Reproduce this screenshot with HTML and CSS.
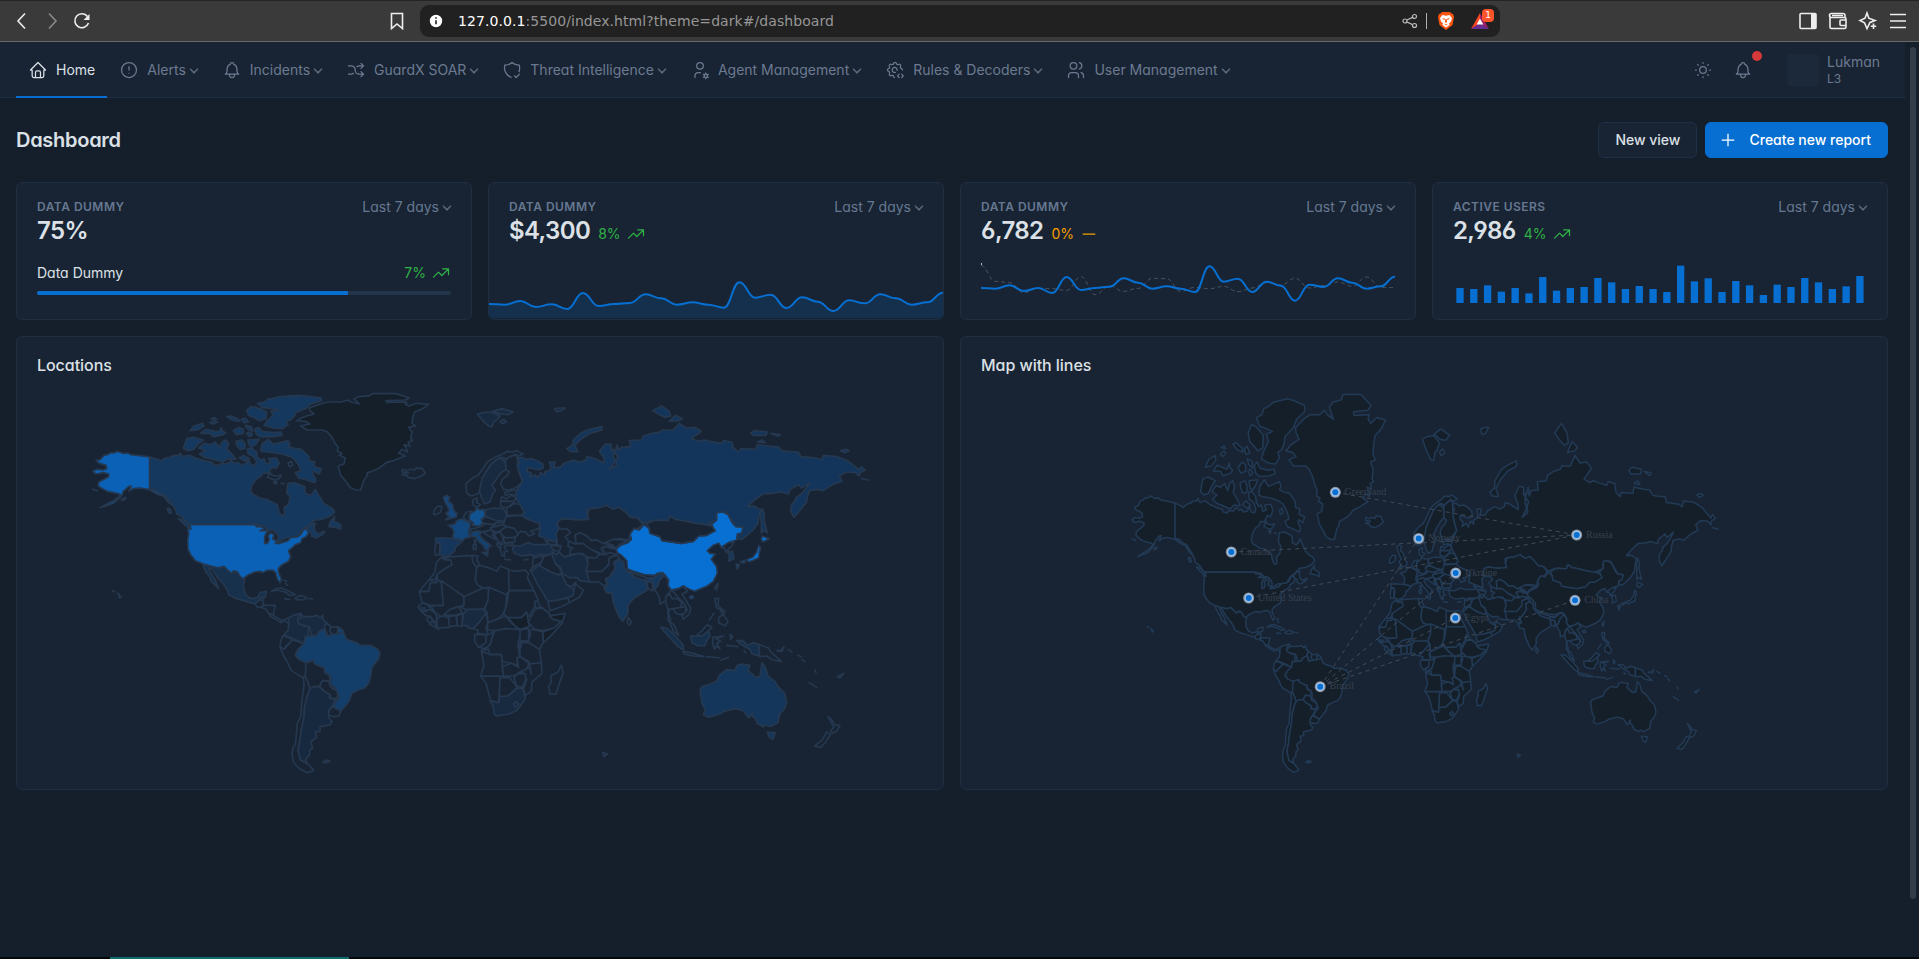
FILE: index.html
```html
<!DOCTYPE html>
<html lang="en">
<head>
<meta charset="utf-8">
<title>Dashboard</title>
<link rel="stylesheet" href="styles.css">
</head>
<body>
<svg class="defs" aria-hidden="true">
  <symbol id="trend" viewBox="0 0 24 24"><path d="M3 17l6-6 4 4 8-8M14 7h7v7"/></symbol>
  <symbol id="bell" viewBox="0 0 24 24"><path d="M10 5a2 2 0 1 1 4 0a7 7 0 0 1 4 6v3a4 4 0 0 0 2 3h-16a4 4 0 0 0 2-3v-3a7 7 0 0 1 4-6M9 17v1a3 3 0 0 0 6 0v-1"/></symbol>
</svg>

<div class="browser">
  <div class="browser-nav">
    <svg class="bi" viewBox="0 0 20 20"><path d="M13 2.500L6 10l7 7.500"/></svg>
    <svg class="bi dim" viewBox="0 0 20 20"><path d="M7 2.500L14 10l-7 7.500"/></svg>
    <svg class="bi" viewBox="0 0 20 20"><path d="M16.500 12A7 7 0 1 1 15.500 5.500"/><path class="solid" d="M17.500 3v6h-6z"/></svg>
  </div>
  <svg class="bi bookmark" viewBox="0 0 20 20"><path d="M4.500 2.500h11v15L10 13l-5.500 4.500z"/></svg>
  <div class="address">
    <svg class="info" viewBox="0 0 14 14"><circle cx="7" cy="7" r="7"/><path d="M7 6.300v4M7 3.300v1.500"/></svg>
    <span class="url"><b>127.0.0.1</b>:5500/index.html?theme=dark#/dashboard</span>
    <svg class="share" viewBox="0 0 16 16"><circle cx="3" cy="8" r="2"/><circle cx="12.500" cy="3.500" r="2"/><circle cx="12.500" cy="12.500" r="2"/><path d="M5 7l5.500-2.600M5 9l5.500 2.600"/></svg>
    <span class="divider"></span>
    <svg class="lion" viewBox="0 0 16 18"><path fill="#fb5412" d="M4 0h8l1.500 1.500L15 2l1 3-1.500 8L8 18l-6.500-5L0 5l1-3 1.500-.5z"/><path fill="#fff" d="M4.500 3l3.500.7 3.500-.7 2.500 3-1 3.500-2 2 .6 1.500L8 15.500l-3.600-2.500.6-1.500-2-2L2 6z"/><path fill="#fb5412" d="M4 6l3 .8-.7 1.400zM12 6l-3 .8.7 1.400zM7.400 7h1.200l.5 3L8 11l-1.100-1zM5.800 11.500L8 12.500l2.200-1L8 13.700z"/></svg>
    <span class="bat">
      <svg viewBox="0 0 18 16"><path fill="#ff4724" d="M9 0L0 16l9-5.500z"/><path fill="#9e1f63" d="M9 0l9 16-9-5.500z"/><path fill="#662d91" d="M0 16h18l-9-6z"/><path fill="#fff" d="M9 5.500l3.300 6H5.700z"/></svg>
      <span class="count">1</span>
    </span>
  </div>
  <div class="browser-tools">
    <svg class="bi" viewBox="0 0 20 20"><rect x="2" y="2.500" width="16" height="15" rx="1"/><path class="solid" d="M13 2.500h5v15h-5z"/></svg>
    <svg class="bi" viewBox="0 0 20 20"><path d="M17 6.500V4.500a2 2 0 0 0-2-2H3.500a2 2 0 0 0 0 4H16.500a1.500 1.500 0 0 1 1.500 1.500v8a1.500 1.500 0 0 1-1.500 1.500H3.500A1.500 1.500 0 0 1 2 16V4.500M18 9h-5a1 1 0 0 0-1 1v3.500a1 1 0 0 0 1 1h5M4 4.500h11"/></svg>
    <svg class="bi" viewBox="0 0 20 20"><path d="M9 2l1.800 5.200L17 9.500l-5 2-3 6-2.500-5.700L2 9.500l5-2.300z"/><path d="M15.500 12.500v5.500M12.800 15.300h5.400"/></svg>
    <svg class="bi" viewBox="0 0 20 20"><path d="M2 3.500h16M2 10h16M2 16.500h16"/></svg>
  </div>
</div>

<div class="viewport">
<nav class="navbar">
  <a class="nav-item active"><svg class="ti" viewBox="0 0 24 24"><path d="M5 12H3l9-9 9 9h-2M5 12v7a2 2 0 0 0 2 2h10a2 2 0 0 0 2-2v-7M9 21v-6a2 2 0 0 1 2-2h2a2 2 0 0 1 2 2v6"/></svg>Home</a>
  <a class="nav-item drop"><svg class="ti" viewBox="0 0 24 24"><circle cx="12" cy="12" r="9"/><path d="M12 8v4M12 16v.010"/></svg>Alerts</a>
  <a class="nav-item drop"><svg class="ti"><use href="#bell"/></svg>Incidents</a>
  <a class="nav-item drop"><svg class="ti" viewBox="0 0 24 24"><path d="M18 4l3 3-3 3M18 20l3-3-3-3M3 7h3a5 5 0 0 1 5 5 5 5 0 0 0 5 5h5M21 7h-5a4.980 4.980 0 0 0-3 1M9 16a4.980 4.980 0 0 1-3 1H3"/></svg>GuardX SOAR</a>
  <a class="nav-item drop"><svg class="ti" viewBox="0 0 24 24"><path d="M11 20.700A12 12 0 0 1 3.500 6 12 12 0 0 0 12 3a12 12 0 0 0 8.500 3 12 12 0 0 1 0 8M15 19l2 2 4-4"/></svg>Threat Intelligence</a>
  <a class="nav-item drop"><svg class="ti" viewBox="0 0 24 24"><circle cx="12" cy="7" r="4"/><path d="M6 21v-2a4 4 0 0 1 4-4h2.500"/><circle cx="19" cy="19" r="2"/><path d="M19 15.500V17M19 21v1.500M22 17.200l-1.300.8M17.300 20l-1.300.800M16 17.200l1.300.8M20.700 20l1.300.8"/></svg>Agent Management</a>
  <a class="nav-item drop"><svg class="ti" viewBox="0 0 24 24"><path d="M11.500 21c-.500 0-1-.400-1.200-1.300a1.700 1.700 0 0 0-2.600-1.100c-1.500 1-3.300-.8-2.400-2.400a1.700 1.700 0 0 0-1-2.500c-1.800-.5-1.800-3 0-3.400a1.700 1.700 0 0 0 1-2.600c-.9-1.500.9-3.300 2.400-2.400 1 .6 2.300.1 2.600-1.100.4-1.700 3-1.700 3.400 0a1.700 1.700 0 0 0 2.600 1.100c1.500-.9 3.300.9 2.400 2.400a1.700 1.700 0 0 0 1 2.600c.9.2 1.300.9 1.300 1.700"/><path d="M14.500 12.500a3 3 0 1 0-2 2.300M20 21l2-2-2-2M17 17l-2 2 2 2"/></svg>Rules &amp; Decoders</a>
  <a class="nav-item drop"><svg class="ti" viewBox="0 0 24 24"><circle cx="9" cy="7" r="4"/><path d="M3 21v-2a4 4 0 0 1 4-4h4a4 4 0 0 1 4 4v2M16 3.130a4 4 0 0 1 0 7.750M21 21v-2a4 4 0 0 0-3-3.850"/></svg>User Management</a>
  <div class="nav-right">
    <svg class="ti" viewBox="0 0 24 24"><circle cx="12" cy="12" r="4"/><path d="M3 12h1M12 3v1M20 12h1M12 20v1M5.600 5.600l.7.700M18.400 5.600l-.7.700M17.700 17.700l.7.700M6.300 17.700l-.7.700"/></svg>
    <span class="notify"><svg class="ti"><use href="#bell"/></svg><i></i></span>
    <span class="avatar"></span>
    <span class="user">Lukman<small>L3</small></span>
  </div>
</nav>

<main class="page">
  <header class="page-head">
    <h1>Dashboard</h1>
    <a class="btn">New view</a>
    <a class="btn primary"><svg class="ti" viewBox="0 0 24 24"><path d="M12 5v14M5 12h14"/></svg>Create new report</a>
  </header>

  <section class="stats">
    <article class="card">
      <div class="card-top"><span class="label">Data Dummy</span><span class="period drop">Last 7 days</span></div>
      <div class="value">75%</div>
      <div class="progress-row"><span>Data Dummy</span><span class="delta up">7% <svg class="ti"><use href="#trend"/></svg></span></div>
      <div class="progress"><div class="progress-fill" style="width:75%"></div></div>
    </article>
    <article class="card">
      <div class="card-top"><span class="label">Data Dummy</span><span class="period drop">Last 7 days</span></div>
      <div class="value">$4,300 <span class="delta up">8% <svg class="ti"><use href="#trend"/></svg></span></div>
      <svg class="area" id="area" viewBox="27 324 1362 120" preserveAspectRatio="none"></svg>
    </article>
    <article class="card">
      <div class="card-top"><span class="label">Data Dummy</span><span class="period drop">Last 7 days</span></div>
      <div class="value">6,782 <span class="delta flat">0% <svg class="ti" viewBox="0 0 24 24"><path d="M5 12h14"/></svg></span></div>
      <svg class="chart" id="lines" viewBox="93 267 1242 132"><path class="tick" d="M94 279v6"/></svg>
    </article>
    <article class="card">
      <div class="card-top"><span class="label">Active users</span><span class="period drop">Last 7 days</span></div>
      <div class="value">2,986 <span class="delta up">4% <svg class="ti"><use href="#trend"/></svg></span></div>
      <svg class="chart" id="bars" viewBox="99 267 1242 132"></svg>
    </article>
  </section>

  <section class="maps">
    <article class="card map-card">
      <h2>Locations</h2>
      <svg class="map" viewBox="37 380 886 400"><g id="world" class="world" transform="translate(60 380) scale(.33333)"></g></svg>
    </article>
    <article class="card map-card">
      <h2>Map with lines</h2>
      <svg class="map" viewBox="981 380 886 400">
        <g id="mercator" class="mercator"></g>
        <g id="links" class="links"></g>
        <g id="pins" class="pins"></g>
      </svg>
    </article>
  </section>
</main>
<div class="scrollbar"></div>
</div>
<div class="taskbar"><span></span></div>
<script src="maps.js"></script>
</body>
</html>
```
FILE: styles.css
```css
* { box-sizing: border-box; }
html, body { height: 100%; }
body {
  margin: 0;
  display: flex;
  flex-direction: column;
  overflow: hidden;
  background: #151f2c;
  color: #dce1e7;
  font: 400 14px/20px Inter, "Liberation Sans", sans-serif;
  font-feature-settings: "cv03", "cv04", "cv11";
}
h1, h2 { margin: 0; }
.defs { position: absolute; width: 0; height: 0; }
.ti {
  width: 20px; height: 20px; flex: none;
  fill: none; stroke: currentColor; stroke-width: 1.5;
  stroke-linecap: round; stroke-linejoin: round;
}

/* browser chrome */
.browser {
  flex: none; height: 42px; display: flex; align-items: center;
  background: #3a3a3a; border-top: 1px solid #242424; border-bottom: 1px solid #66686b;
  padding: 0 11px 0 12px;
}
.bi { width: 20px; height: 20px; fill: none; stroke: #eee; stroke-width: 1.6; }
.bi .solid { fill: #eee; stroke: none; }
.bi.dim { stroke: #8a8a8a; }
.browser-nav { display: flex; gap: 10px; }
.bookmark { margin-left: 295px; }
.address {
  width: 1080px; height: 32px; margin-left: 13px; padding: 0 11px 0 9px;
  display: flex; align-items: center; background: #212121; border-radius: 9px;
}
.info { width: 14px; height: 14px; fill: #fff; stroke: #212121; stroke-width: 1.6; }
.url { flex: 1; margin-left: 15px; color: #969696; font: 14px "DejaVu Sans", sans-serif; letter-spacing: .07px; }
.url b { color: #fff; font-weight: 400; }
.share { width: 16px; height: 16px; fill: none; stroke: #bdbdbd; stroke-width: 1.2; }
.divider { width: 1px; height: 16px; margin: 0 11px 0 8px; background: #b0b0b0; }
.lion { width: 16px; height: 18px; }
.bat { position: relative; margin-left: 17px; width: 18px; height: 16px; }
.bat svg { display: block; width: 18px; height: 16px; }
.count {
  position: absolute; left: 11px; top: -4px; width: 12px; height: 13px; border-radius: 4px;
  background: #fb542b; color: #fff; font: 9px/13px "DejaVu Sans", sans-serif; text-align: center;
}
.browser-tools { display: flex; gap: 10px; margin-left: auto; }

/* top navigation */
.viewport { flex: 1; position: relative; min-height: 0; }
.navbar {
  width: 1905px; height: 56px; padding-left: 16px; display: flex;
  background: #182433; border-bottom: 1px solid #1f2e41; color: #6c7a91;
}
.nav-item { display: flex; align-items: center; padding: 0 12px; height: 56px; white-space: nowrap; }
.nav-item .ti { margin-right: 8px; }
.nav-item.active { color: #dce1e7; border-bottom: 2px solid #066fd1; padding-top: 2px; }
.drop::after {
  content: ""; width: 5px; height: 5px; margin: 0 1px 2px 5px; flex: none;
  border: solid currentColor; border-width: 0 1px 1px 0; transform: rotate(45deg);
  outline: 0; box-shadow: .4px .4px 0 currentColor;
}
.nav-right { margin-left: auto; padding-right: 25px; display: flex; align-items: center; }
.notify { position: relative; margin-left: 20px; display: flex; }
.notify i { position: absolute; left: 19px; top: -9px; width: 10px; height: 10px; border-radius: 50%; background: #d63939; }
.avatar { width: 32px; height: 32px; margin-left: 34px; border-radius: 4px; background: #1b293a; }
.user { margin-left: 8px; line-height: 18px; }
.user small { display: block; font-size: 12px; line-height: 16px; }

/* page */
.page { width: 1905px; padding: 24px 17px 0 16px; }
.page-head { display: flex; align-items: center; gap: 8px; height: 36px; }
.page-head h1 { flex: 1; font-size: 20px; line-height: 28px; font-weight: 600; letter-spacing: -.28px; }
.btn {
  height: 36px; padding: 0 16px; display: flex; align-items: center;
  border: 1px solid #1f3047; border-radius: 6px; background: #182433; font-weight: 500;
}
.btn.primary { background: #066fd1; border-color: #066fd1; color: #fff; padding-left: 12px; }
.btn .ti { margin-right: 11px; }
.stats { display: grid; grid-template-columns: repeat(4, 1fr); gap: 16px; margin-top: 24px; }
.card {
  height: 138px; padding: 16px 20px; overflow: hidden; background: #182433;
  border: 1px solid #1f2e41; border-radius: 6px; display: flex; flex-direction: column;
}
.card-top { display: flex; justify-content: space-between; align-items: center; height: 16px; color: #667891; flex: none; }
.label { font-size: 12px; font-weight: 600; letter-spacing: .04em; text-transform: uppercase; }
.period { display: flex; align-items: center; }
.value {
  margin-top: 1px; font-size: 24px; line-height: 29px; font-weight: 600; letter-spacing: -.6px;
  display: flex; align-items: baseline; gap: 8px;
}
.delta { font-size: 14px; line-height: 20px; font-weight: 400; letter-spacing: 0; display: inline-flex; align-items: center; gap: 5px; }
.up { color: #2fb344; }
.flat { color: #f59f00; }
.progress-row { display: flex; justify-content: space-between; margin-top: 18px; }
.progress { height: 4px; margin-top: 8px; border-radius: 2px; background: #243449; overflow: hidden; }
.progress-fill { height: 4px; background: #066fd1; }
.chart { width: 414px; height: 44px; margin-top: auto; flex: none; }
.area { width: 454px; height: 40px; margin: auto -20px -15px; flex: none; }
.line { fill: none; stroke: #066fd1; stroke-width: 6; stroke-linecap: round; }
.line.prev { stroke: #4a5563; stroke-width: 3; stroke-dasharray: 12 9; stroke-linecap: butt; }
.tick { stroke: #dce1e7; stroke-width: 3; }
.fill { fill: #066fd1; opacity: .16; }
.bar { fill: #066fd1; }
.maps { display: grid; grid-template-columns: 1fr 1fr; gap: 16px; margin-top: 16px; }
.map-card { height: 454px; padding: 18px 20px 9px; }
.map-card h2 { font-size: 16px; line-height: 20px; font-weight: 500; letter-spacing: -.05px; }
.map { width: 886px; height: 400px; margin-top: auto; flex: none; }

/* maps */
.world path { stroke: #25384f; stroke-width: 5; stroke-linejoin: round; }
.mercator path { fill: #151f2a; stroke: #233a55; stroke-width: 1.5; stroke-linejoin: round; }
.links line { stroke: #414b58; stroke-width: 1; stroke-dasharray: 4 4; }
.pins .halo { fill: #8b939f; }
.pins .ring { fill: #a3c4ea; }
.pins .dot { fill: #066fd1; }
.pins text { font: 10px "Liberation Serif", serif; fill: #35404e; }

.scrollbar { position: absolute; right: 3px; top: 5px; width: 6px; height: 852px; border-radius: 3px; background: #333d49; }
.taskbar { flex: none; height: 2px; background: #04090c; }
.taskbar span { display: block; width: 239px; height: 2px; margin-left: 110px; background: #0f6c6c; }
```
FILE: maps.js
```js
const NS = 'http://www.w3.org/2000/svg';
function add(id, tag, attrs, text) {
  const el = document.createElementNS(NS, tag);
  for (const k in attrs) el.setAttribute(k, attrs[k]);
  if (text) el.textContent = text;
  document.getElementById(id).appendChild(el);
}

// Small charts
function smooth(x0, step, ys) {
  let d = `M${x0} ${ys[0]}`;
  for (let i = 1; i < ys.length; i++) {
    const a = x0 + step * (i - 1), b = x0 + step * i;
    d += `C${a + step * .45} ${ys[i - 1]} ${b - step * .45} ${ys[i]} ${b} ${ys[i]}`;
  }
  return d;
}
const revenue = [402,404,393,411,403,417,369,408,402,399,373,385,404,397,404,413,337,383,374,414,382,395,423,391,400,373,385,404,397,368];
const clients = [354,356,346,363,354,369,321,360,354,350,325,338,356,349,356,366,289,335,326,366,335,347,392,344,351,325,338,356,349,320];
const previous = [287,334,338,368,355,356,361,320,374,348,364,355,325,326,364,352,356,349,365,354,338,345,325,354,347,336,349,321,352,353];
const users = [354,357,346,365,354,370,321,362,354,351,324,337,357,348,357,366,287,334,325,366,333,346,375,344,351,324,337,357,349,318];
const rev = smooth(27, 1362 / 29, revenue);
add('area', 'path', { class: 'fill', d: rev + 'V444H27Z' });
add('area', 'path', { class: 'line', d: rev });
add('lines', 'path', { class: 'line prev', d: smooth(93, 1242 / 29, previous) });
add('lines', 'path', { class: 'line', d: smooth(93, 1242 / 29, clients) });
users.forEach((y, i) => add('bars', 'rect', { class: 'bar', x: 109 + 41.37 * i, y, width: 22, height: 399 - y }));

// Countries: [fill, outline rings]
const none = '#182433', dark = '#151f2a', low = '#182a40';
const west = [
['#0b61b6','269,231 240,227 213,224 204,219 188,220 172,214 162,219 152,218 142,224 132,226 122,238 108,242 118,250 138,256 140,266 128,270 112,268 98,274 108,282 130,278 146,282 146,290 132,298 116,306 114,318 130,328 142,334 160,338 172,340 182,344 172,354 158,364 140,372 120,383 140,377 160,370 176,356 186,346 190,334 206,320 214,318 206,334 220,326 240,324 262,328 276,328 290,334 304,338 316,350 326,360 340,378 326,368 310,348 296,344 280,336 269,330;184,358 198,352 196,358 186,361;98,328 112,332'],
['#0b61b6','390,433 584,433 590,440 604,440 612,446 600,452 614,452 630,450 618,460 614,472 614,490 622,490 628,478 624,468 632,458 642,464 638,478 650,482 646,490 660,490 684,482 692,472 712,470 722,464 730,450 740,446 746,460 738,470 726,476 722,488 706,494 698,502 686,512 692,530 686,544 664,556 655,566 656,578 664,598 660,608 652,596 646,576 636,570 620,572 606,578 602,574 584,576 566,584 552,594 550,602 540,590 532,576 522,572 514,580 502,570 492,560 474,564 450,558 430,552 406,542 392,524 384,508 383,480 386,460 382,438 392,446;158,632 164,635;172,640 178,643;176,646 184,650 178,653'],
['#14385e','269,231 292,238 302,242 316,234 330,232 342,226 356,226 360,220 368,230 388,226 406,234 440,244 456,246 460,254 476,256 484,250 500,252 514,242 524,250 534,246 540,254 556,252 566,240 572,254 584,256 590,246 582,230 564,222 562,206 574,204 590,216 592,230 602,240 612,236 618,252 632,248 626,236 650,234 658,250 648,266 636,262 624,280 610,278 602,290 590,296 576,314 572,334 580,344 594,350 604,356 620,358 640,368 652,374 656,392 660,402 668,408 674,402 672,384 686,372 690,352 680,338 684,310 704,308 720,314 734,320 736,340 750,346 758,340 766,328 774,342 784,358 788,366 800,376 818,386 824,396 812,408 786,418 764,420 748,434 742,442 752,434 766,430 762,440 764,452 774,462 794,454 790,462 768,474 754,468 756,460 742,450 740,440 726,450 712,470 692,472 676,474 660,484 648,488 656,474 650,460 638,450 622,448 612,438 584,433 390,433 382,430 366,410 350,402 348,392 338,374 316,346 300,340 286,330 269,326'],
['#14385e','784,54 740,48 716,46 660,50 636,56 622,58 614,66 592,70 606,82 636,86 656,90 632,94 640,106 622,122 612,136 640,144 668,146 684,134 678,124 692,120 702,110 706,98 740,84 752,72 784,62;560,92 572,80 588,82 604,88 620,96 618,116 598,122 584,114 566,106;584,148 596,142 606,154 640,158 664,156 666,166 640,170 604,171 590,164;556,136 574,140 578,154 562,146;422,160 436,148 456,152 476,156 484,144 488,154 498,158 490,164 460,170 450,160;390,152 402,138 428,130 432,138 412,150;450,128 462,122 472,126 460,132;452,116 464,113 470,118;500,110 512,108 534,116 540,124 516,120;544,118 556,114 566,126 552,128;520,152 536,142 550,148 550,160 530,164;560,160 568,156 578,164 568,170;370,204 380,176 400,172 430,180 414,192 402,208 384,212;416,204 432,190 450,194 466,186 478,202 486,186 498,180 506,192 500,206 516,222 528,238 504,236 488,246 460,238 434,232 418,222 436,212;528,184 546,180 556,192 554,206 540,208 530,196;564,180 598,178 588,192 574,202 566,192;538,234 550,226 568,236 556,244;602,212 606,192 624,178 640,192 660,188 684,182 690,192 684,200 706,206 724,208 746,228 748,242 764,246 762,260 784,266 778,282 760,274 758,280 768,300 764,308 734,298 716,294 706,278 722,272 716,256 704,240 696,232 684,228 664,222 640,218 616,216;806,440 812,424 824,410 822,424 842,434 842,448 828,442;354,416 370,420 388,436 392,448 376,436;322,386 330,386 334,400 326,398'],
[none,'622,292 630,278 636,286 650,288 664,286 658,296 644,300;640,306 650,304 648,312;684,250 694,244 698,256 688,260;664,310 672,312'],
[dark,'710,122 728,112 740,108 762,102 750,92 748,84 780,72 804,66 844,66 862,60 874,66 898,72 882,56 896,50 930,47 936,41 1008,41 1048,54 1036,60 978,62 980,67 1040,66 1036,72 1046,78 1070,70 1106,73 1088,86 1064,96 1058,112 1056,130 1066,138 1046,142 1056,156 1052,176 1058,182 1044,186 1050,198 1032,194 1040,206 1042,216 1026,208 1016,220 1036,228 1014,236 1000,242 978,248 958,264 936,274 922,278 920,290 912,300 902,330 888,330 870,322 856,302 842,286 834,258 852,252 856,234 838,226 846,220 832,214 834,202 824,188 816,172 802,156 788,150 740,150 722,138 750,132 736,124'],
[none,'1028,268 1040,272 1050,268 1064,270 1068,264 1086,265 1096,280 1084,288 1064,296 1044,292 1040,286 1026,284 1046,278 1026,276'],
['#17304c','428,554 450,558 474,564 492,560 502,570 514,580 522,574 532,576 540,590 554,600 550,614 552,632 560,648 576,656 594,652 600,638 620,634 616,650 602,654 594,662 586,672 570,668 530,656 506,644 502,630 490,612 474,594 456,566 446,564 452,578 464,596 476,626 454,604 450,592 438,576'],
[none,'586,672 594,662 604,660 600,654 612,652 608,668 612,672 602,682 590,680;602,682 614,676 646,676 642,692 640,706 626,700 618,688;626,700 640,706 652,714 668,722 684,714 690,724 686,730 672,722 662,728 644,716 632,710;634,634 648,626 664,624 684,632 706,644 688,646 676,636 650,630;706,654 722,646 742,654 728,660 708,658;674,656 688,658;748,656 758,657;672,600 680,604;676,610 682,616'],
[low,'686,714 700,706 722,700 714,712 716,730 730,738 748,740 744,756 748,776 736,768 734,792 718,784 700,776 680,768 670,766 684,752 686,734'],
[low,'722,700 730,710 756,710 772,706 780,714 788,706 790,720 800,728 794,740 796,752 776,756 770,768 756,768 752,754 748,740 730,736 716,730 712,718 724,714'],
[none,'800,728 812,740 810,752 816,766 804,768 796,752 794,740;812,742 834,740 832,762 816,764 810,752'],
['#124272','836,742 850,752 844,764 832,762'],
[none,'668,768 690,774 696,784 680,796 672,808 666,806 660,798 662,784'],
[none,'696,780 712,784 732,792 730,800 716,806 706,824 716,838 736,842 740,852 736,890 730,894 694,872 682,846 668,822 660,800 672,808 690,788'],
['#133e6a','732,792 736,770 756,768 770,768 778,754 794,746 800,768 816,764 832,762 850,756 858,776 870,782 890,788 900,796 930,796 952,806 960,820 956,836 936,862 932,890 926,910 914,924 896,930 876,940 868,962 856,978 842,994 832,986 820,980 828,964 838,954 834,938 824,922 812,912 814,896 808,884 794,876 794,864 764,852 760,840 738,848 716,838 706,824 716,806'],
[none,'738,848 760,842 764,852 792,864 794,878 808,886 810,904 788,902 778,920 762,920 750,928 744,908 736,890'],
[none,'788,902 806,904 812,922 830,932 834,942 828,956 812,954 810,944 790,932 778,920'],
[none,'816,978 842,994 836,1008 820,1010 804,1004 808,992'],
[none,'730,892 736,890 744,908 750,926 742,946 734,980 732,1010 724,1050 720,1080 714,1110 722,1140 744,1152 762,1172 740,1178 716,1164 700,1146 696,1120 700,1100 706,1096 712,1030 722,1010 726,960 732,916'],
['#17293f','750,926 762,920 778,920 790,932 810,944 808,954 828,960 816,978 806,992 806,1014 816,1024 812,1034 780,1040 780,1054 766,1056 770,1072 752,1086 758,1104 750,1110 748,1126 738,1136 740,1148 722,1140 714,1110 720,1080 724,1050 732,1010 734,980 742,946'],
[none,'788,1146 800,1140 810,1144 798,1148']
];
const east = [
['#14467a','130,352 140,346 150,352 144,362 158,374 160,386 166,398 172,400 168,412 150,416 136,420 148,410 138,400 148,390 140,376 134,364'],
[none,'104,388 114,378 126,380 122,396 108,404 100,402'],
[none,'198,310 218,294 236,284 252,262 262,246 284,232 304,224 322,214 336,216 350,212 370,222 354,228 346,222 330,230 318,236 302,232 288,240 274,252 258,276 246,296 244,316 240,334 232,342 214,348 200,340'],
[low,'302,234 316,246 318,268 304,278 290,296 276,316 286,330 276,346 270,366 254,372 244,352 238,334 246,296 258,276 274,252 288,240'],
[none,'316,240 330,230 346,224 354,232 352,258 360,284 368,304 350,322 328,330 310,328 302,310 308,296 320,288 328,276 318,268'],
[none,'218,360 232,354 230,368 242,374 230,382 220,376'],
['#115390','214,398 226,392 230,384 240,390 252,388 256,408 244,418 248,430 238,438 218,436 220,428 208,420 208,406'],
[none,'190,410 200,396 214,394 208,406 208,424 196,420'],
['#12477d','144,436 166,432 168,424 184,416 196,422 212,430 208,446 206,458 210,472 196,474 188,482 158,474 162,456 156,444'],
['#15355a','106,474 130,474 160,476 188,482 178,492 166,502 164,514 148,526 132,530 120,522 122,504 120,488 108,486'],
[none,'108,488 120,490 118,524 106,526 104,508'],
['#124272','212,462 216,454 232,452 246,456 238,464 248,478 262,488 274,498 266,500 264,512 256,508 250,496 236,484 226,470 214,470;246,518 264,516 262,528'],
[none,'220,494 228,494 228,508 220,508;222,480 227,480 226,490'],
[none,'208,448 228,444 246,438 256,430 272,430 284,440 270,450 246,456 232,452 214,458'],
[low,'256,390 280,384 310,386 318,398 320,416 310,424 282,420 256,408'],
[none,'244,420 256,410 284,420 300,424 280,434 250,430;284,430 310,426 310,436 286,442'],
[none,'314,338 332,332 350,330 348,346 330,342 316,346;302,362 306,350 320,356 334,346 348,352 342,364;302,364 342,364 336,376 320,384 302,378;320,384 338,370 360,374 374,398 364,406 322,406'],
[none,'318,410 366,406 380,416 400,424 420,430 416,446 392,454 404,462 386,468 378,456 362,454 352,464 344,446 322,440 310,434'],
[none,'302,450 322,440 344,446 354,464 346,472 318,474 304,464'],
[none,'272,442 286,440 308,434 318,440 298,454 278,456;250,458 272,450 292,458 276,464 292,480 276,474;280,458 300,456 308,470 310,484 298,490 292,478;308,474 346,472 344,486 316,490;290,490 300,490 302,506 294,500;302,494 324,488 338,486 336,496 318,496 312,502 322,514 312,516 314,530 306,526 300,508;314,538 332,540;372,540 384,538'],
['#182c45','340,496 360,498 384,488 402,494 436,494 450,490 462,516 456,524 420,524 400,530 396,524 366,528 344,520 338,508'],
[none,'434,480 468,486 476,500 450,494;450,494 468,494 484,498 478,514 460,510'],
['#14355b','350,234 366,232 378,238 396,236 412,242 428,252 430,264 416,270 382,262 382,274 394,280 390,292 406,284 414,294 422,278 436,286 434,276 454,268 448,246 466,246 460,262 480,262 492,250 520,240 538,246 558,240 560,230 580,234 612,248 612,234 598,214 616,192 634,194 634,212 640,208 640,232 646,244 628,268 650,256 648,240 654,228 642,218 648,206 652,194 656,214 664,202 692,200 688,182 724,180 730,168 756,160 780,156 786,150 820,150 838,130 858,144 884,142 904,154 874,176 896,184 912,180 930,184 964,190 970,182 996,186 1000,204 1016,216 1022,206 1068,208 1072,194 1120,200 1134,200 1146,212 1160,214 1196,216 1202,230 1250,234 1264,240 1270,226 1312,230 1342,242 1366,260 1378,270 1384,260 1396,270 1380,278 1378,288 1366,278 1338,276 1318,288 1326,304 1298,314 1270,332 1252,328 1228,332 1222,350 1220,366 1196,396 1182,412 1172,394 1174,374 1184,364 1188,352 1204,342 1216,328 1230,308 1214,318 1204,324 1196,314 1170,328 1166,342 1140,336 1116,340 1088,342 1064,360 1042,380 1062,378 1082,390 1076,414 1074,430 1058,452 1036,470 1026,478 1012,476 1014,462 1030,442 1008,440 998,424 980,398 956,396 950,404 950,424 938,424 918,434 890,430 850,422 826,418 810,408 804,422 764,420 748,424 732,430 712,414 692,412 676,396 658,382 640,388 620,376 596,384 568,386 560,390 562,404 566,418 532,420 494,416 478,420 472,432 476,448 468,460 472,486 446,478 416,468 420,446 420,430 400,424 380,416 364,406 374,398 362,376 350,360 346,348 352,328 368,304 360,284 352,258 360,248'],
['#14355b','1086,386 1094,402 1092,420 1096,436 1102,458 1088,450 1084,460 1084,430 1082,404;500,206 518,196 520,180 544,158 570,148 606,140 606,150 570,160 544,176 524,196 534,216 510,214;758,92 784,78 806,92 812,108 796,112 774,102;808,124 826,106 848,116 836,122;1052,158 1064,152 1102,156 1098,166 1060,166;1112,160 1142,164 1134,169;1072,186 1086,180 1096,188;1322,212 1338,208 1348,212 1334,218;1384,296 1406,300'],
[low,'232,102 250,98 276,96 300,108 290,120 282,124 276,140 266,138 250,124;278,94 306,86 340,96 324,104 302,102;300,124 312,118 320,126 306,130;464,86 480,84 496,84 480,94 468,94'],
[none,'472,432 478,420 494,416 532,420 566,418 562,404 568,386 596,384 620,376 640,388 658,382 676,396 692,412 712,414 728,432 716,446 702,446 690,462 686,480 660,476 640,478 620,486 608,492 590,480 574,482 560,468 540,458 526,464 528,494 506,484 496,470 512,458 500,446 484,448 474,442'],
[none,'506,484 526,492 548,490 570,506 600,520 588,534 562,532 548,520 510,524 510,510 520,504 504,500;528,490 526,464 540,458 560,468 574,482 590,480 608,490 636,494 618,500 624,510 610,500 604,508 612,516 604,524 570,506 548,490'],
[none,'616,488 640,478 686,482 660,492 650,502 630,500 640,496;612,516 604,504 622,500 634,506 650,506 654,520 628,526'],
[low,'454,516 470,524 476,516 492,530 512,526 534,520 558,528 564,552 558,572 570,588 568,606 540,602 530,592 510,594 488,580 480,560 466,552 458,536'],
[none,'430,530 456,522 466,552 478,562 486,580 474,584 452,576 420,558 424,546;400,534 432,528 424,546 402,560 398,550;390,572 400,558 414,562 402,572'],
[low,'394,574 416,556 452,576 474,584 486,584 500,614 522,628 526,646 476,660 444,664 436,652 430,640 412,612'],
[none,'444,664 476,660 504,654 508,668 480,682 450,692;522,628 526,612 550,630 540,650 508,668 504,654 520,646;500,614 514,620 528,606 522,628'],
[none,'562,532 588,534 600,522 616,524 628,518 650,522 628,534 626,554 606,574 570,580 558,572 564,552'],
[none,'560,574 606,574 626,554 628,534 650,526 660,536 642,546 646,566 628,592 616,596 622,616 608,616 598,606 568,606'],
['#15375c','642,546 658,538 672,546 672,560 686,578 702,590 736,602 742,594 758,596 778,582 796,580 792,592 778,602 774,616 764,630 758,610 740,604 742,630 722,642 700,656 684,676 684,700 668,724 656,708 640,668 636,640 620,638 612,624 626,616 618,600 628,592 646,566'],
[none,'688,574 712,584 738,592 736,602 702,590;740,606 758,608 758,632 744,626;684,712 694,726 688,736 682,728;742,594 758,592 758,598'],
['#0770d2','648,508 662,496 684,488 694,478 690,462 702,446 718,450 732,434 748,446 750,460 780,470 786,482 844,490 880,484 896,468 920,466 942,452 936,434 918,434 938,430 950,420 950,398 970,396 984,404 998,430 1008,440 1030,442 1024,460 1012,462 1010,480 986,488 964,502 956,490 940,496 922,512 930,520 946,522 934,538 950,560 952,580 940,604 922,618 884,634 868,628 850,618 836,626 814,630 804,618 806,600 796,586 788,578 772,580 764,586 732,584 700,574 682,566 680,542 662,524 654,520'],
['#0770d2','868,650 878,646 880,654 872,656;1086,468 1096,472 1108,476 1096,482 1088,486 1084,478;1076,496 1082,504 1078,518 1076,534 1062,540 1046,546 1042,538 1058,532 1070,516;1008,552 1018,554 1012,568;1020,546 1038,540 1032,550'],
[none,'740,432 764,420 804,422 810,408 826,418 850,422 890,430 918,434 936,438 946,452 920,466 896,468 880,484 844,490 786,482 780,470 750,460 748,446'],
[none,'964,502 986,488 1002,486 994,500 982,510 990,516 978,516 974,504'],
['#17375c','984,518 998,514 1002,536 986,544 988,530'],
[none,'944,624 954,610 950,630'],
[none,'764,630 774,616 778,602 792,586 804,600 804,618 814,632 800,646 796,664 780,672 778,650'],
[none,'798,650 810,642 816,656 832,656 846,668 842,682 820,686 808,688 806,700 812,720 804,722 804,690 798,668;816,632 836,626 850,618 862,634 846,642 862,668 872,684 868,702 850,718 846,708 862,690 852,670 836,654 824,640;820,686 842,682 858,680 856,698 840,704 826,698;808,724 822,734 836,766 820,754'],
['#16304b','782,742 800,744 816,758 830,772 850,796 850,810 834,800 812,776;872,768 888,768 906,768 926,752 930,768 920,782 914,798 890,796 876,788;1040,796 1060,788 1078,794 1078,828 1056,822 1050,808 1034,800 1022,792 1010,782 1030,782'],
[none,'890,766 906,752 922,734 936,742 926,752 906,768;850,814 880,820 912,830 880,828 852,822;920,830 960,834;964,840 986,832;938,772 972,768 948,776 962,784 950,790 960,806 948,798 944,808 938,790;990,762 998,770 992,778;980,796 1014,800;1032,812 1038,820;1078,794 1106,804 1112,816 1144,844 1118,840 1100,828 1078,830;1130,812 1144,810 1152,800 1146,814;1164,808 1176,816;1194,826 1204,830;1206,838 1214,844;1244,870 1248,878;1228,908 1250,922;1312,890 1332,880 1320,894;944,656 956,654 954,676 968,690 950,684;956,712 970,704 984,724 976,738 956,728;928,720 942,700;960,690 974,692 970,706'],
['#14365a','900,930 906,920 930,912 950,904 958,886 980,868 1004,872 1012,856 1024,852 1050,856 1044,872 1068,892 1080,890 1086,848 1096,862 1104,888 1126,906 1134,920 1154,940 1160,966 1154,986 1140,1000 1134,1028 1110,1040 1098,1034 1090,1040 1072,1030 1066,1016 1056,1008 1058,998 1046,1014 1030,992 1006,986 972,994 960,1002 926,1012 910,1004 916,990 906,970;1102,1056 1126,1058 1118,1078 1108,1072'],
[none,'1284,1010 1296,1020 1304,1034 1320,1036 1310,1054 1298,1060 1292,1052 1302,1042;1280,1056 1292,1062 1276,1088 1262,1102 1244,1098 1268,1078;608,1118 622,1122 612,1130;484,856 490,878 478,910 468,942 450,942 446,920 454,906 452,888 474,876'],
[none,'110,546 124,532 134,540 152,540 156,554 138,564 112,582 104,600 86,600 104,578;86,600 110,598 110,608 92,608 88,634 58,634;124,534 160,530 216,526 218,546 230,562 226,600 234,616 250,624 192,650 112,598 112,582 138,564 156,554 152,540;216,526 234,528 230,540 238,552 230,562 218,546'],
[none,'230,562 240,556 268,564 290,574 300,558 326,568 327,634 318,644 266,622 250,624 234,616 226,600;326,570 350,574 376,570 386,582 382,594 402,632 327,632;58,636 86,634 92,608 110,608 110,598 124,608 130,676 92,676 66,668;124,602 192,650 192,676 160,684 136,704 124,710 106,698 92,678 130,676'],
[none,'192,650 250,624 266,626 264,660 252,688 200,690 184,682 192,676;266,622 320,644 318,676 312,700 294,716 264,728 262,700 254,688 264,660;327,632 402,632 414,660 400,686 386,710 376,698 366,712 324,714 310,700 320,676'],
[dark,'322,712 350,714 366,712 380,696 388,740 360,748 344,736'],
[none,'404,690 420,680 444,696 456,714 484,724 462,744 430,752 404,748 384,726 392,712;404,664 414,664 420,678 444,698 430,684 408,686'],
[dark,'448,708 496,700 486,730 456,764 430,788 428,756 462,744 484,724 460,718'],
[none,'54,680 70,668 84,676 94,690 60,690;60,690 94,690 106,700 112,716 104,728 92,710 76,706;80,718 90,708 98,722 90,732;98,722 116,748 88,732;112,744 110,714 130,708 146,714 148,742;148,740 146,710 168,706 172,736;130,706 150,688 176,680 186,698 166,706;172,738 170,708 188,700 186,738;58,684 76,684;64,694 80,694'],
[low,'186,738 190,702 202,688 252,688 258,704 240,724 220,746 206,744 200,736'],
[none,'220,746 240,724 258,700 264,730 258,740 264,764 232,760 234,750;264,750 262,730 296,716 316,708 334,728 356,748 318,746 284,752;224,764 258,764 258,788 236,802 224,784;258,764 272,762 282,752 272,790 256,808 240,802 258,788;284,752 318,746 356,748 364,756 354,788 358,830 350,856 334,850 306,844 304,824 270,824 266,808 246,810 270,796 278,770'],
[none,'360,750 384,746 392,762 384,782 360,784;386,750 402,748 428,756 430,788 418,808 386,788;360,788 386,788 418,808 424,848 390,852 360,830;354,792 364,792 362,804 356,806;244,812 270,824 304,824 306,844 310,888 242,888 252,856;306,860 334,850 356,862 350,834 362,830 388,846 380,866 340,888 310,888;424,848 426,880 396,906 394,934 376,946 370,926 380,900 374,880 356,878 388,862 394,882 388,852;342,892 356,880 376,882 378,900 366,922 350,918;300,894 328,892 352,922 324,948 298,952;242,888 328,890 300,894 296,968 272,962 258,910'],
[low,'270,962 296,968 298,950 324,948 352,924 368,926 376,956 352,990 328,1002 290,1008 282,1000 280,980;340,972 350,964 356,974 346,982']
];
const parse = s => s.split(';').map(r => r.trim().split(/\s+/).map(p => p.split(',').map(Number)));
const toPath = rings => rings.map(r => 'M' + r.map(p => p.map(n => +n.toFixed(1)).join(' ')).join('L') + 'Z').join('');

// Miller sheet to Mercator sheet
function mercator([x, y]) {
  const px = 60 + x / 3, t = (639.4 - (380 + y / 3)) / 124;
  const lat = 2.5 * (Math.atan(Math.exp(.8 * t)) - Math.PI / 4);
  return [1175 + .7552 * (px - 149.7), 663.8 - 93.6 * Math.log(Math.tan(Math.PI / 4 + lat / 2))];
}
for (const [list, dx] of [[west, 0], [east, 1020]]) {
  for (const [fill, shape] of list) {
    const rings = parse(shape).map(r => r.map(([x, y]) => [x + dx, y]));
    add('world', 'path', { fill, d: toPath(rings) });
    add('mercator', 'path', { d: toPath(rings.map(r => r.map(mercator))) });
  }
}

const places = {
  Greenland: [1335.3, 492.3], Canada: [1231.3, 552], 'United States': [1248.7, 598], Brazil: [1320.2, 686.7],
  Norway: [1418.7, 538.5], Russia: [1576.7, 535], Ukraine: [1455.7, 573], Egypt: [1455.3, 618], China: [1575, 600.3]
};
const routes = [['Greenland', 'Russia'], ['Canada', 'Russia'], ['United States', 'Russia'],
  ['Brazil', 'Norway'], ['Brazil', 'Ukraine'], ['Brazil', 'Egypt'], ['Brazil', 'China']];
for (const [a, b] of routes) {
  add('links', 'line', { x1: places[a][0], y1: places[a][1], x2: places[b][0], y2: places[b][1] });
}
for (const name in places) {
  const [x, y] = places[name];
  for (const [part, r] of [['halo', 5.5], ['ring', 4.4], ['dot', 3]]) {
    add('pins', 'circle', { class: part, cx: x, cy: y, r });
  }
  add('pins', 'text', { x: x + 9.3, y: y + 2.700 }, name);
}
```
